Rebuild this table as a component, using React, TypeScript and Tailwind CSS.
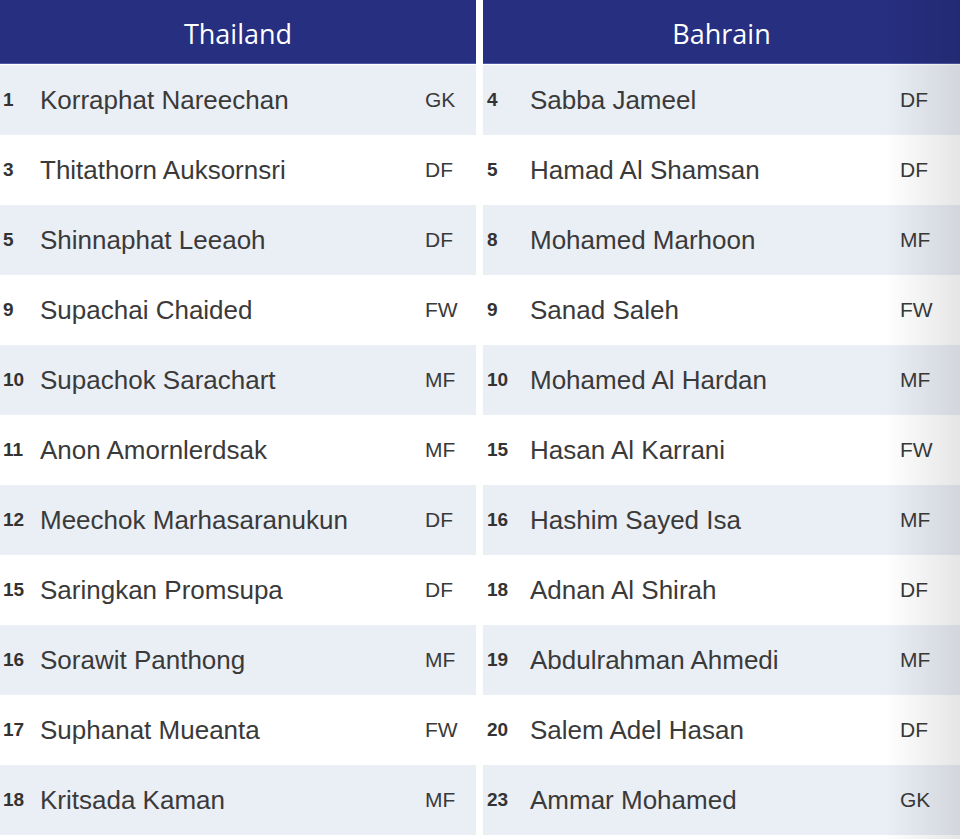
import React from "react";

type P = [string, string, string];

const thai: P[] = [
  ["1", "Korraphat Nareechan", "GK"],
  ["3", "Thitathorn Auksornsri", "DF"],
  ["5", "Shinnaphat Leeaoh", "DF"],
  ["9", "Supachai Chaided", "FW"],
  ["10", "Supachok Sarachart", "MF"],
  ["11", "Anon Amornlerdsak", "MF"],
  ["12", "Meechok Marhasaranukun", "DF"],
  ["15", "Saringkan Promsupa", "DF"],
  ["16", "Sorawit Panthong", "MF"],
  ["17", "Suphanat Mueanta", "FW"],
  ["18", "Kritsada Kaman", "MF"],
];

const bahrain: P[] = [
  ["4", "Sabba Jameel", "DF"],
  ["5", "Hamad Al Shamsan", "DF"],
  ["8", "Mohamed Marhoon", "MF"],
  ["9", "Sanad Saleh", "FW"],
  ["10", "Mohamed Al Hardan", "MF"],
  ["15", "Hasan Al Karrani", "FW"],
  ["16", "Hashim Sayed Isa", "MF"],
  ["18", "Adnan Al Shirah", "DF"],
  ["19", "Abdulrahman Ahmedi", "MF"],
  ["20", "Salem Adel Hasan", "DF"],
  ["23", "Ammar Mohamed", "GK"],
];

function Team({ title, players, right }: { title: string; players: P[]; right?: boolean }) {
  return (
    <div className={right ? "w-[477px] shrink-0" : "w-[476px] shrink-0"}>
      <div className="h-[64px] bg-[#262f80] border-b border-[#4f5aa6] flex items-center justify-center">
        <span className="text-white text-[27px] font-['Open_Sans',sans-serif] leading-none pt-[3px]">{title}</span>
      </div>
      <div className="h-[1px] bg-white" />
      {players.map((p, i) => (
        <div
          key={i}
          className={
            "h-[70px] flex items-center text-[#3a3a3a] font-['Liberation_Sans',Arial,sans-serif] " +
            (i % 2 === 0 ? "bg-[#eaeef5]" : "bg-white")
          }
        >
          <span className={right ? "w-[47px] pl-[4px] font-bold text-[19px] text-[#333]" : "w-[40px] pl-[3px] font-bold text-[19px] text-[#333]"}>
            {p[0]}
          </span>
          <span className={right ? "w-[370px] text-[26px]" : "w-[385px] text-[26px]"}>{p[1]}</span>
          <span className="text-[21px]">{p[2]}</span>
        </div>
      ))}
    </div>
  );
}

export default function App() {
  return (
    <div className="relative w-[960px] h-[839px] overflow-hidden bg-white">
      <div className="flex gap-[7px]">
        <Team title="Thailand" players={thai} />
        <Team title="Bahrain" players={bahrain} right />
      </div>
      <div className="absolute top-0 right-0 h-full w-[75px] bg-gradient-to-r from-transparent to-black/10 pointer-events-none" />
    </div>
  );
}
